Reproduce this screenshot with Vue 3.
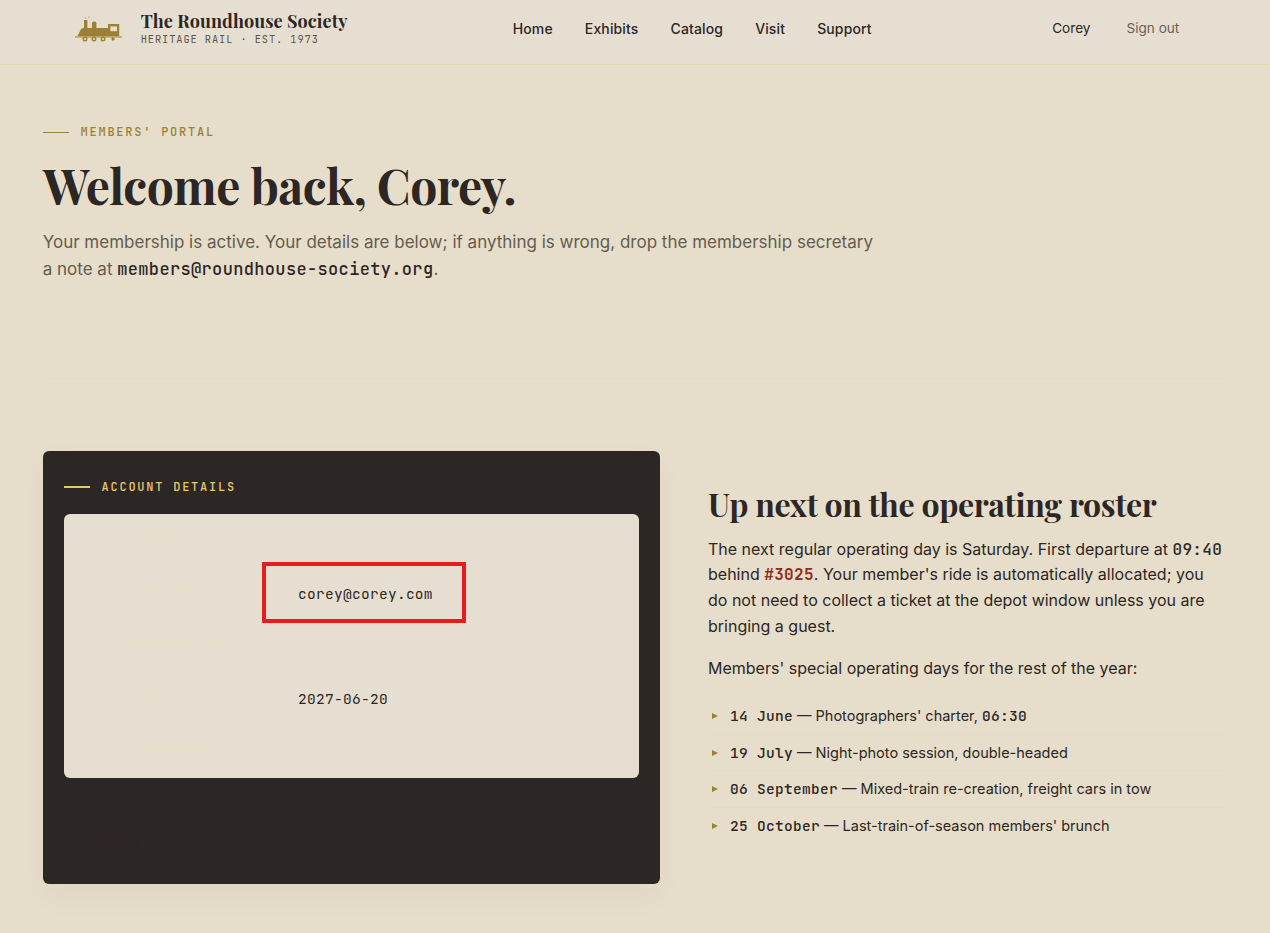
<template>
  <div class="page">
    <header class="topbar">
      <a class="brand">
        <svg class="brand-mark" width="48" height="28" viewBox="0 0 48 28">
          <g fill="#9b8035">
            <rect x="9" y="6" width="3.4" height="9" />
            <path d="M17 9.2Q17 7.5 18.8 7.5H19.6Q21.4 7.5 21.4 9.2V15H17Z" />
            <path d="M2.2 22.5L5 17.2Q6 14 9 14H33V10H44.2V22.5Z" />
            <rect x="9.6" y="3.4" width="1.6" height="1.2" opacity=".55" />
            <rect x="13" y="2.6" width="1.6" height="1.4" opacity=".4" />
          </g>
          <rect x="35.4" y="12.4" width="6.6" height="4.8" fill="#e6dfd1" />
          <rect x="0" y="22.2" width="47" height="1.5" fill="#b6a063" />
          <g fill="#e6dfd1" stroke="#9b8035" stroke-width="1.4">
            <circle cx="10" cy="25" r="1.8" />
            <circle cx="19" cy="25" r="1.8" />
            <circle cx="28" cy="25" r="1.8" />
          </g>
          <circle cx="38" cy="25" r="1.7" fill="#9b8035" />
        </svg>
        <span class="brand-text">
          <span class="brand-name">The Roundhouse Society</span>
          <span class="brand-tag">HERITAGE RAIL · EST. 1973</span>
        </span>
      </a>
      <nav class="nav">
        <a v-for="link in links" :key="link">{{ link }}</a>
      </nav>
      <div class="user">
        <a class="user-name">Corey</a>
        <a class="sign-out">Sign out</a>
      </div>
    </header>

    <main class="main">
      <section class="hero">
        <div class="eyebrow">MEMBERS' PORTAL</div>
        <h1>Welcome back, Corey.</h1>
        <p class="lead">
          Your membership is active. Your details are below; if anything is wrong, drop the membership secretary
          a note at <span class="mono strong">members@roundhouse-society.org</span>.
        </p>
      </section>

      <section class="columns">
        <div class="card">
          <div class="eyebrow eyebrow-light">ACCOUNT DETAILS</div>
          <div class="details">
            <div v-for="row in details" :key="row.label" class="detail-row">
              <div class="detail-label">{{ row.label }}</div>
              <div class="detail-value mono">{{ row.value }}</div>
              <div v-if="row.marked" class="marker"></div>
            </div>
          </div>
          <a class="card-action">Sign out</a>
        </div>

        <div class="roster">
          <h2>Up next on the operating roster</h2>
          <p>
            The next regular operating day is Saturday. First departure at <span class="mono strong">09:40</span>
            behind <span class="mono engine">#3025</span>. Your member's ride is automatically allocated; you
            do not need to collect a ticket at the depot window unless you are bringing a guest.
          </p>
          <p>Members' special operating days for the rest of the year:</p>
          <ul class="days">
            <li v-for="day in days" :key="day.date">
              <svg class="bullet" width="6" height="6" viewBox="0 0 6 6"><path d="M0 0L6 3L0 6Z" fill="#9b8035" /></svg>
              <span><span class="mono strong">{{ day.date }}</span> — {{ day.text }}<template v-if="day.time">, <span class="mono strong">{{ day.time }}</span></template></span>
            </li>
          </ul>
        </div>
      </section>
    </main>
  </div>
</template>

<script setup>
const links = ['Home', 'Exhibits', 'Catalog', 'Visit', 'Support']

const details = [
  { label: 'Display name', value: '' },
  { label: 'Email address', value: 'corey@corey.com', marked: true },
  { label: 'Membership tier', value: '' },
  { label: 'Renews', value: '2027-06-20' },
  { label: 'Newsletter', value: '' }
]

const days = [
  { date: '14 June', text: "Photographers' charter", time: '06:30' },
  { date: '19 July', text: 'Night-photo session, double-headed' },
  { date: '06 September', text: 'Mixed-train re-creation, freight cars in tow' },
  { date: '25 October', text: "Last-train-of-season members' brunch" }
]
</script>

<style>
body {
  margin: 0;
  background: #e6deca;
}
</style>

<style scoped>
.page {
  box-sizing: border-box;
  height: 933px;
  overflow: hidden;
  background: #e6deca;
  color: #2c2624;
  font-family: Inter, "Liberation Sans", sans-serif;
  font-size: 16px;
  line-height: 25.6px;
}

.mono {
  font-family: "JetBrains Mono", "DejaVu Sans Mono", monospace;
  letter-spacing: 0.02em;
}

.strong {
  font-weight: 500;
}

.engine {
  font-weight: 700;
  color: #8f2c1a;
}

.topbar {
  box-sizing: border-box;
  height: 65px;
  display: grid;
  grid-template-columns: 437.7px 1fr auto;
  padding: 0 90.7px 0 75px;
  background: #e6dfd1;
  border-bottom: 1px solid #e3d6b5;
}

.brand {
  display: flex;
  gap: 17.7px;
}

.brand-mark {
  margin-top: 14px;
}

.brand-text {
  display: flex;
  flex-direction: column;
  padding-top: 10px;
}

.brand-name {
  font: 700 18px/23px "Playfair Display", "Liberation Serif", serif;
  letter-spacing: 0.08px;
  white-space: nowrap;
}

.brand-tag {
  font: 10.4px/13px "JetBrains Mono", "DejaVu Sans Mono", monospace;
  letter-spacing: 0.89px;
  color: #5d534a;
  white-space: nowrap;
}

.nav {
  display: flex;
  gap: 32px;
  padding-top: 16px;
  font-size: 14px;
  font-weight: 500;
  letter-spacing: 0.14px;
}

.user {
  display: flex;
  gap: 36px;
  padding-top: 16px;
  font-size: 13.6px;
}

.sign-out {
  color: #6b6158;
}

.main {
  padding: 0 45px 0 43px;
}

.hero {
  box-sizing: border-box;
  height: 314px;
  padding-top: 57px;
  border-bottom: 1px solid #e6dac4;
}

.eyebrow {
  display: flex;
  align-items: center;
  gap: 11.5px;
  font: 500 12px/20px "JetBrains Mono", "DejaVu Sans Mono", monospace;
  letter-spacing: 1.76px;
  color: #9b8035;
}

.eyebrow::before {
  content: '';
  width: 26px;
  height: 1px;
  background: #9b8035;
}

.eyebrow-light {
  color: #e8c872;
}

.eyebrow-light::before {
  height: 2px;
  background: #e8c872;
}

h1 {
  margin: 15px 0 0;
  font: 700 48px/56px "Playfair Display", "Liberation Serif", serif;
  letter-spacing: -0.48px;
  white-space: nowrap;
}

.lead {
  width: 840px;
  margin: 16px 0 0 -0.3px;
  font-size: 17px;
  line-height: 27.2px;
  color: #655b50;
}

.lead .mono {
  color: #2c2624;
}

.columns {
  display: grid;
  grid-template-columns: 617px 1fr;
  gap: 48px;
  padding-top: 72px;
}

.card {
  box-sizing: border-box;
  height: 433px;
  padding: 26px 21px 0;
  border-radius: 6px;
  background: #2c2624;
  box-shadow: 0 12px 32px rgba(60, 40, 20, 0.04);
}

.details {
  height: 264px;
  margin-top: 17px;
  border-radius: 6px;
  background: #e6dfd1;
}

.detail-row {
  position: relative;
  box-sizing: border-box;
  display: grid;
  grid-template-columns: 218px 1fr;
  height: 52.8px;
  border-bottom: 1px solid #e5ddd0;
}

.detail-row:last-child {
  border-bottom: none;
}

.detail-label {
  padding-top: 9px;
  text-align: center;
  font-size: 14.4px;
  font-weight: 500;
  color: #e7dfcc;
}

.detail-value {
  padding: 14px 16px 0;
  font-size: 14.5px;
}

/* highlight frame around the email value */
.marker {
  position: absolute;
  box-sizing: border-box;
  left: 198px;
  top: -5px;
  width: 204px;
  height: 61px;
  border: 4px solid #e81c1c;
}

.card-action {
  display: block;
  margin: 50px 0 0 23px;
  font-size: 14px;
  color: #2b2523;
}

.roster {
  padding-top: 32px;
}

h2 {
  margin: 0;
  font: 700 32px/42px "Playfair Display", "Liberation Serif", serif;
  letter-spacing: -0.32px;
  white-space: nowrap;
}

.roster p {
  margin: 11.5px 0 0;
  line-height: 25.75px;
}

.roster p + p {
  margin-top: 16.2px;
}

.days {
  margin: 16.8px 0 0;
  padding: 0;
  list-style: none;
  font-size: 14.5px;
}

.days li {
  box-sizing: border-box;
  display: flex;
  align-items: center;
  height: 36.6px;
  padding-left: 4px;
  border-bottom: 1px solid #e6d9c6;
}

.days li:last-child {
  height: 35.6px;
  border-bottom: none;
}

.bullet {
  margin-right: 12px;
}
</style>
